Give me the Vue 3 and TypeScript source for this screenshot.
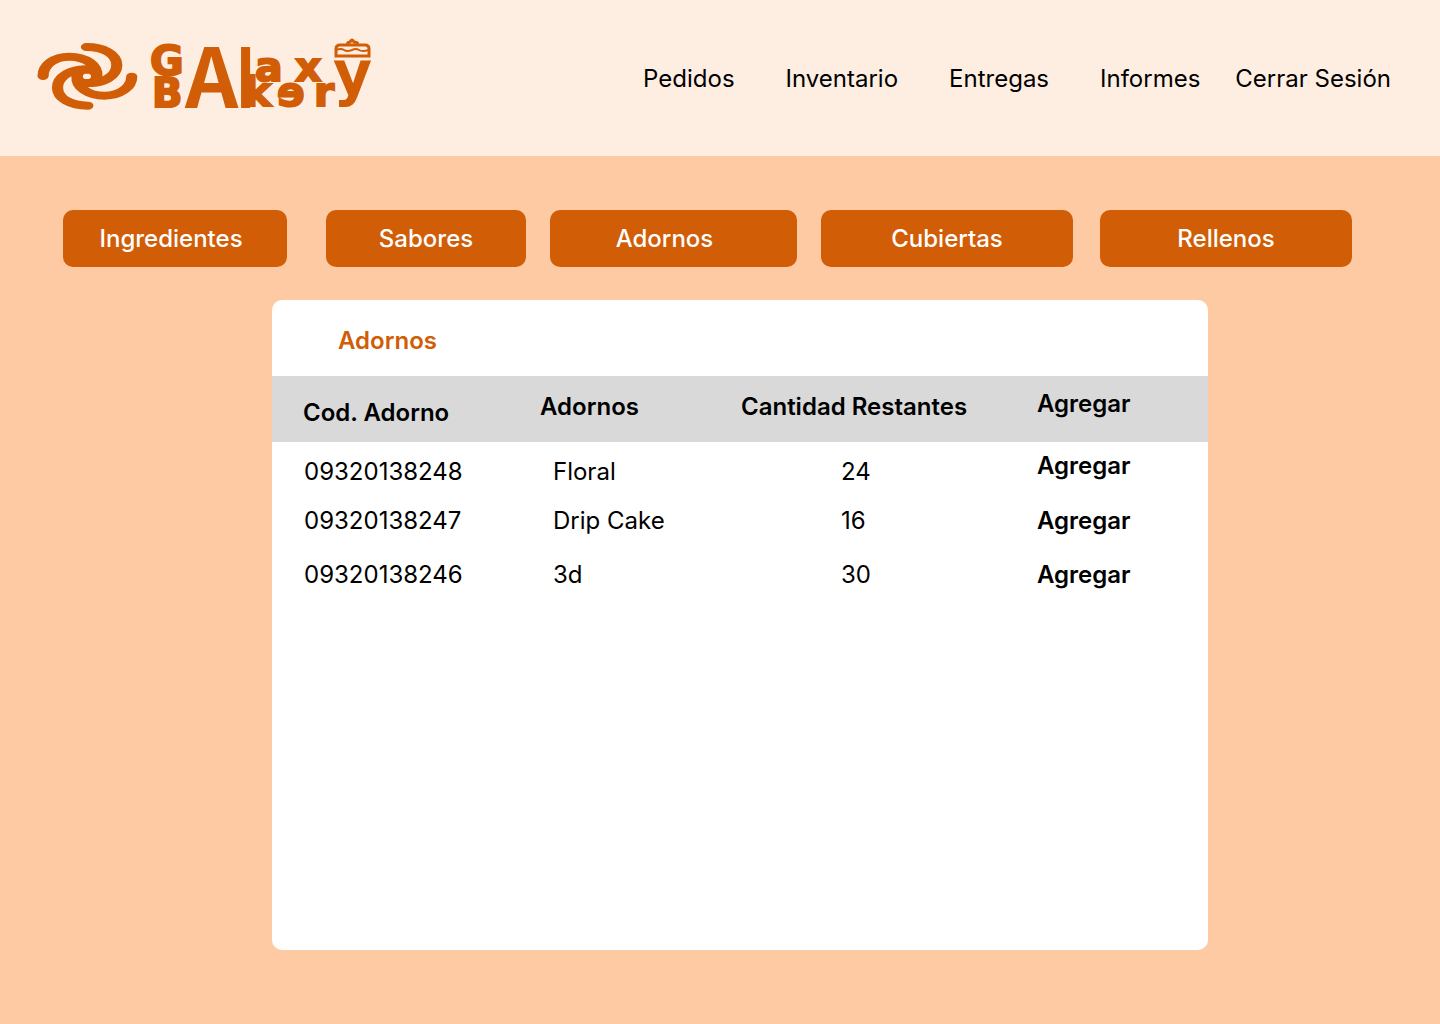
<script setup lang="ts">
interface Adorno {
  codigo: string
  nombre: string
  cantidad: number
}

const enlaces: string[] = ['Pedidos', 'Inventario', 'Entregas', 'Informes', 'Cerrar Sesión']
const categorias: string[] = ['Ingredientes', 'Sabores', 'Adornos', 'Cubiertas', 'Rellenos']
const adornos: Adorno[] = [
  { codigo: '09320138248', nombre: 'Floral', cantidad: 24 },
  { codigo: '09320138247', nombre: 'Drip Cake', cantidad: 16 },
  { codigo: '09320138246', nombre: '3d', cantidad: 30 },
]
</script>

<template>
  <div class="page">
    <header class="header">
      <a class="brand" href="#" aria-label="Galaxy Bakery">
        <svg class="galaxy" viewBox="21 24 303 216" aria-hidden="true">
          <g fill="none" stroke="currentColor" stroke-width="24" stroke-linecap="round" transform="scale(1.4 1)">
            <path d="M28 138C28 106 51 80 84 80C120 80 146 106 143 139" />
            <path d="M121 51C158 51 186 73 186 105C186 137 158 162 121 159" />
            <path d="M218 140C218 171 193 197 160 197C124 197 98 171 101 139" />
            <path d="M124 227C87 227 59 205 59 173C59 141 86 116 123 119" />
            <ellipse cx="122" cy="139" rx="21" ry="21" />
          </g>
        </svg>
        <svg class="wordmark" viewBox="144 36 230 76" aria-hidden="true">
          <g fill="currentColor">
            <text class="wide" font-size="41" x="150" y="75">G</text>
            <text class="wide" font-size="40" x="152" y="107">B</text>
            <text class="narrow" font-size="83" x="185" y="108">A</text>
            <text class="stem" font-size="84" x="235" y="108">l</text>
            <text class="wide" font-size="41" x="255 295" y="81">ax</text>
            <text class="wide" font-size="41" x="244 277 314" y="106">kɘr</text>
            <text class="tall" font-size="60" x="333" y="94">y</text>
          </g>
          <g fill="none" stroke="currentColor" stroke-width="3">
            <path d="M336 56V49Q336 45 340 45H365Q369 45 369 49V56Z" />
            <path d="M336 50Q341 48 344 50T352 50Q356 48 359 50T369 50" stroke-width="2" />
            <path d="M347 44Q348 42 350 42Q352 38 354 42Q357 42 358 44" />
          </g>
        </svg>
      </a>
      <nav class="nav" aria-label="Principal">
        <a v-for="enlace in enlaces" :key="enlace" href="#">{{ enlace }}</a>
      </nav>
    </header>

    <main>
      <div class="tabs">
        <button v-for="categoria in categorias" :key="categoria" type="button">{{ categoria }}</button>
      </div>

      <section class="card" aria-labelledby="titulo">
        <h1 id="titulo">Adornos</h1>
        <table>
          <thead>
            <tr>
              <th class="code" scope="col">Cod. Adorno</th>
              <th class="name" scope="col">Adornos</th>
              <th class="amount" scope="col">Cantidad Restantes</th>
              <th class="action" scope="col">Agregar</th>
            </tr>
          </thead>
          <tbody>
            <tr v-for="adorno in adornos" :key="adorno.codigo">
              <td class="code">{{ adorno.codigo }}</td>
              <td class="name">{{ adorno.nombre }}</td>
              <td class="amount">{{ adorno.cantidad }}</td>
              <td class="action"><button type="button">Agregar</button></td>
            </tr>
          </tbody>
        </table>
      </section>
    </main>
  </div>
</template>

<style>
body {
  margin: 0;
  background: #fecaa3;
}
</style>

<style scoped>
.page {
  min-height: 100vh;
  box-sizing: border-box;
  padding-bottom: 74px;
  background: #fecaa3;
  color: #000;
  font: 400 24px/30px Inter, "Liberation Sans", sans-serif;
}

.header {
  display: flex;
  align-items: center;
  justify-content: space-between;
  box-sizing: border-box;
  min-height: 156px;
  padding: 0 49px 0 37px;
  background: #feeee1;
}

.brand {
  display: flex;
  align-items: center;
  gap: 6px;
  margin-bottom: 8px;
  color: #d15d06;
}

.galaxy {
  width: 101px;
  height: 72px;
}

.wordmark {
  width: 230px;
  height: 76px;
  overflow: visible;
}

.wide,
.tall {
  font-family: "DejaVu Sans", sans-serif;
  font-weight: 700;
}

.wide {
  stroke: currentColor;
  stroke-width: 2px;
}

.narrow {
  font-family: "Noto Sans CJK JP", sans-serif;
  font-weight: 700;
}

.stem {
  font-family: Inter, sans-serif;
  font-weight: 500;
}

.nav {
  display: flex;
  gap: 35px;
  padding-top: 2px;
}

.nav a {
  color: inherit;
  text-decoration: none;
  white-space: nowrap;
}

.nav a:nth-child(-n + 3) {
  margin-right: 16px;
}

.tabs {
  display: grid;
  grid-template-columns: 239fr 200fr 247fr 255fr 252fr;
  column-gap: 24px;
  padding: 54px 88px 33px 63px;
}

button {
  border: 0;
  padding: 0;
  background: none;
  color: inherit;
  font: inherit;
  cursor: pointer;
}

.tabs button {
  height: 57px;
  border-radius: 10px;
  background: #d15d06;
  color: #fff;
  font-weight: 500;
}

.tabs button:nth-child(1) {
  margin-right: 15px;
  padding-right: 8px;
}

.tabs button:nth-child(3) {
  padding-right: 18px;
}

.tabs button:nth-child(4) {
  margin-right: 3px;
}

.card {
  min-height: 650px;
  margin: 0 232px 0 272px;
  border-radius: 10px;
  background: #fff;
}

h1 {
  margin: 0;
  padding: 26px 66px 20px;
  color: #d15d06;
  font-size: 24px;
  font-weight: 600;
  line-height: 30px;
}

table {
  width: 100%;
  table-layout: fixed;
  border-collapse: collapse;
}

th {
  height: 50px;
  padding: 16px 0 0;
  background: #d9d9d9;
  font-weight: 600;
  text-align: left;
  vertical-align: top;
  white-space: nowrap;
}

td {
  height: 39px;
  padding: 15px 0 0;
  vertical-align: top;
  white-space: nowrap;
}

tbody tr:first-child td {
  height: 34px;
}

th.code {
  width: 237px;
  height: 44px;
  padding: 22px 0 0 31px;
}

th.name {
  width: 201px;
}

th.amount {
  width: 296px;
}

th.action {
  padding-top: 13px;
}

td.code {
  padding-left: 32px;
}

td.name {
  padding-left: 13px;
}

td.amount {
  padding-left: 100px;
}

td.action button {
  font-weight: 600;
}

tbody tr:first-child td.action {
  padding-top: 9px;
}
</style>
